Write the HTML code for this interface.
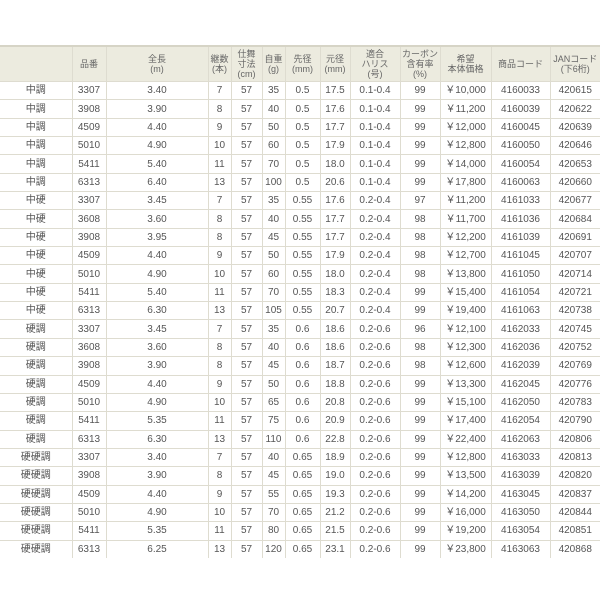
<!DOCTYPE html><html><head><meta charset="utf-8"><style>
body{margin:0;width:600px;height:600px;background:#fff;overflow:hidden}
table{position:absolute;top:45px;left:0;border-collapse:collapse;table-layout:fixed;width:600px;font-family:"Liberation Sans","Noto Sans CJK JP",sans-serif;font-size:10px;color:#555}
td,th{border:1px solid #dedcd0;text-align:center;padding:0;white-space:nowrap;overflow:hidden}
th{background:#ecebdf;font-weight:normal;height:34px;line-height:10px;font-size:9px;border-top:2px solid #d6d4c6;color:#666}
td{height:17.35px;line-height:17px}
tr:last-child td{border-bottom:none}
tr td:first-child,tr th:first-child{border-left:none}
tr td:last-child,tr th:last-child{border-right:none}
</style></head><body>
<table>
<colgroup><col style="width:72px"><col style="width:34px"><col style="width:102px"><col style="width:23px"><col style="width:31px"><col style="width:23px"><col style="width:35px"><col style="width:30px"><col style="width:50px"><col style="width:40px"><col style="width:51px"><col style="width:59px"><col style="width:50px"></colgroup>
<tr><th></th><th>品番</th><th>全長<br>(m)</th><th>継数<br>(本)</th><th>仕舞<br>寸法<br>(cm)</th><th>自重<br>(g)</th><th>先径<br>(mm)</th><th>元径<br>(mm)</th><th>適合<br>ハリス<br>(号)</th><th>カーボン<br>含有率<br>(%)</th><th>希望<br>本体価格</th><th>商品コード</th><th>JANコード<br>(下6桁)</th></tr>
<tr><td>中調</td><td>3307</td><td>3.40</td><td>7</td><td>57</td><td>35</td><td>0.5</td><td>17.5</td><td>0.1-0.4</td><td>99</td><td>￥10,000</td><td>4160033</td><td>420615</td></tr>
<tr><td>中調</td><td>3908</td><td>3.90</td><td>8</td><td>57</td><td>40</td><td>0.5</td><td>17.6</td><td>0.1-0.4</td><td>99</td><td>￥11,200</td><td>4160039</td><td>420622</td></tr>
<tr><td>中調</td><td>4509</td><td>4.40</td><td>9</td><td>57</td><td>50</td><td>0.5</td><td>17.7</td><td>0.1-0.4</td><td>99</td><td>￥12,000</td><td>4160045</td><td>420639</td></tr>
<tr><td>中調</td><td>5010</td><td>4.90</td><td>10</td><td>57</td><td>60</td><td>0.5</td><td>17.9</td><td>0.1-0.4</td><td>99</td><td>￥12,800</td><td>4160050</td><td>420646</td></tr>
<tr><td>中調</td><td>5411</td><td>5.40</td><td>11</td><td>57</td><td>70</td><td>0.5</td><td>18.0</td><td>0.1-0.4</td><td>99</td><td>￥14,000</td><td>4160054</td><td>420653</td></tr>
<tr><td>中調</td><td>6313</td><td>6.40</td><td>13</td><td>57</td><td>100</td><td>0.5</td><td>20.6</td><td>0.1-0.4</td><td>99</td><td>￥17,800</td><td>4160063</td><td>420660</td></tr>
<tr><td>中硬</td><td>3307</td><td>3.45</td><td>7</td><td>57</td><td>35</td><td>0.55</td><td>17.6</td><td>0.2-0.4</td><td>97</td><td>￥11,200</td><td>4161033</td><td>420677</td></tr>
<tr><td>中硬</td><td>3608</td><td>3.60</td><td>8</td><td>57</td><td>40</td><td>0.55</td><td>17.7</td><td>0.2-0.4</td><td>98</td><td>￥11,700</td><td>4161036</td><td>420684</td></tr>
<tr><td>中硬</td><td>3908</td><td>3.95</td><td>8</td><td>57</td><td>45</td><td>0.55</td><td>17.7</td><td>0.2-0.4</td><td>98</td><td>￥12,200</td><td>4161039</td><td>420691</td></tr>
<tr><td>中硬</td><td>4509</td><td>4.40</td><td>9</td><td>57</td><td>50</td><td>0.55</td><td>17.9</td><td>0.2-0.4</td><td>98</td><td>￥12,700</td><td>4161045</td><td>420707</td></tr>
<tr><td>中硬</td><td>5010</td><td>4.90</td><td>10</td><td>57</td><td>60</td><td>0.55</td><td>18.0</td><td>0.2-0.4</td><td>98</td><td>￥13,800</td><td>4161050</td><td>420714</td></tr>
<tr><td>中硬</td><td>5411</td><td>5.40</td><td>11</td><td>57</td><td>70</td><td>0.55</td><td>18.3</td><td>0.2-0.4</td><td>99</td><td>￥15,400</td><td>4161054</td><td>420721</td></tr>
<tr><td>中硬</td><td>6313</td><td>6.30</td><td>13</td><td>57</td><td>105</td><td>0.55</td><td>20.7</td><td>0.2-0.4</td><td>99</td><td>￥19,400</td><td>4161063</td><td>420738</td></tr>
<tr><td>硬調</td><td>3307</td><td>3.45</td><td>7</td><td>57</td><td>35</td><td>0.6</td><td>18.6</td><td>0.2-0.6</td><td>96</td><td>￥12,100</td><td>4162033</td><td>420745</td></tr>
<tr><td>硬調</td><td>3608</td><td>3.60</td><td>8</td><td>57</td><td>40</td><td>0.6</td><td>18.6</td><td>0.2-0.6</td><td>98</td><td>￥12,300</td><td>4162036</td><td>420752</td></tr>
<tr><td>硬調</td><td>3908</td><td>3.90</td><td>8</td><td>57</td><td>45</td><td>0.6</td><td>18.7</td><td>0.2-0.6</td><td>98</td><td>￥12,600</td><td>4162039</td><td>420769</td></tr>
<tr><td>硬調</td><td>4509</td><td>4.40</td><td>9</td><td>57</td><td>50</td><td>0.6</td><td>18.8</td><td>0.2-0.6</td><td>99</td><td>￥13,300</td><td>4162045</td><td>420776</td></tr>
<tr><td>硬調</td><td>5010</td><td>4.90</td><td>10</td><td>57</td><td>65</td><td>0.6</td><td>20.8</td><td>0.2-0.6</td><td>99</td><td>￥15,100</td><td>4162050</td><td>420783</td></tr>
<tr><td>硬調</td><td>5411</td><td>5.35</td><td>11</td><td>57</td><td>75</td><td>0.6</td><td>20.9</td><td>0.2-0.6</td><td>99</td><td>￥17,400</td><td>4162054</td><td>420790</td></tr>
<tr><td>硬調</td><td>6313</td><td>6.30</td><td>13</td><td>57</td><td>110</td><td>0.6</td><td>22.8</td><td>0.2-0.6</td><td>99</td><td>￥22,400</td><td>4162063</td><td>420806</td></tr>
<tr><td>硬硬調</td><td>3307</td><td>3.40</td><td>7</td><td>57</td><td>40</td><td>0.65</td><td>18.9</td><td>0.2-0.6</td><td>99</td><td>￥12,800</td><td>4163033</td><td>420813</td></tr>
<tr><td>硬硬調</td><td>3908</td><td>3.90</td><td>8</td><td>57</td><td>45</td><td>0.65</td><td>19.0</td><td>0.2-0.6</td><td>99</td><td>￥13,500</td><td>4163039</td><td>420820</td></tr>
<tr><td>硬硬調</td><td>4509</td><td>4.40</td><td>9</td><td>57</td><td>55</td><td>0.65</td><td>19.3</td><td>0.2-0.6</td><td>99</td><td>￥14,200</td><td>4163045</td><td>420837</td></tr>
<tr><td>硬硬調</td><td>5010</td><td>4.90</td><td>10</td><td>57</td><td>70</td><td>0.65</td><td>21.2</td><td>0.2-0.6</td><td>99</td><td>￥16,000</td><td>4163050</td><td>420844</td></tr>
<tr><td>硬硬調</td><td>5411</td><td>5.35</td><td>11</td><td>57</td><td>80</td><td>0.65</td><td>21.5</td><td>0.2-0.6</td><td>99</td><td>￥19,200</td><td>4163054</td><td>420851</td></tr>
<tr><td>硬硬調</td><td>6313</td><td>6.25</td><td>13</td><td>57</td><td>120</td><td>0.65</td><td>23.1</td><td>0.2-0.6</td><td>99</td><td>￥23,800</td><td>4163063</td><td>420868</td></tr>
</table>
</body></html>
